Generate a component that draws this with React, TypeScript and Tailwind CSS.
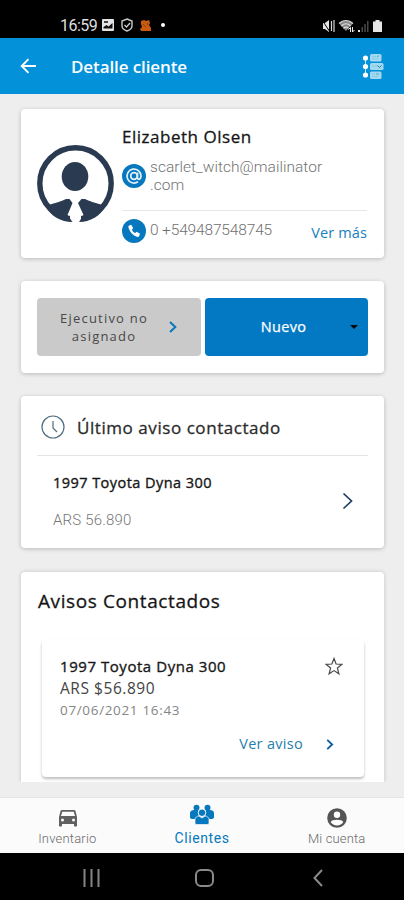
import React from 'react';

const Chevron = ({ className, width = 2 }: { className: string; width?: number }) => (
  <svg viewBox="0 0 12 18" className={className} fill="none" stroke="currentColor" strokeWidth={width}>
    <path d="M1.5 1.5 9.5 9l-8 7.5" />
  </svg>
);

function StatusBar() {
  return (
    <div className="flex h-[38px] shrink-0 items-end bg-black pl-[60px] pr-[20px] pb-[5px] text-[#dedede]">
      <span className="w-[42px] font-[Roboto] text-[16px] leading-[15px] tracking-[-0.5px]">16:59</span>
      <svg viewBox="0 0 12 12" className="mb-[2px] h-[12px] w-[12px]">
        <rect width="12" height="12" rx="1" fill="#e4e4e4" />
        <path d="M1.5 9.5V8l3-2 2 1.5L10.5 4v5.5z" fill="#111" />
        <path d="M2 2h4v2H2z" fill="#444" />
      </svg>
      <svg viewBox="0 0 12 14" className="mb-[1px] ml-[7px] h-[14px] w-[12px]" fill="none" stroke="#c9c9c9" strokeWidth="1.4">
        <path d="M6 1 11 3v5c0 2-2 4-5 5-3-1-5-3-5-5V3z" />
        <path d="m3.5 7 2 2L9 5" />
      </svg>
      <svg viewBox="0 0 11 12" className="mb-[2px] ml-[7px] h-[12px] w-[11px]" fill="#c95b10">
        <path d="M1 2 4 1l2 1 3-1 1 3-1 2 2 3v3H1l-1-2 2-2-1-3z" />
        <path d="m3 5 3 3M7 4l1 2" stroke="#8a400b" />
      </svg>
      <span className="mb-[6px] ml-[10px] h-[4px] w-[4px] rounded-full bg-white" />
      <svg viewBox="0 0 62 14" className="ml-auto h-[14px] w-[62px]" fill="#e6e6e6">
        <path d="M1 4h2l4-3v12l-4-3H1z" />
        <path d="m0 1 8 12" stroke="#000" strokeWidth="1" />
        <path d="M9.500 2v10M12 1v12" stroke="#d6d6d6" strokeWidth="1.2" />
        <path d="M17 4.500c4-4 10-4 14 0l-7 7.500z" fill="#888" />
        <path d="M17 4.500c4-4 10-4 14 0M19.300 7c3-3 6.500-3 9.400 0M21.500 9.300c1.500-1.500 3.500-1.500 5 0" fill="none" stroke="#ddd" strokeWidth="1.2" />
        <path d="m26.500 10.500 2-2v4.500M30.500 8v5l2-2" stroke="#eee" fill="none" />
        <path d="M36 11h2v2h-2z" />
        <path d="M39.500 8h1.500v5h-1.500zM42.300 5h1.500v8h-1.500zM45 2h1.500v11H45z" fill="#484848" />
        <path d="M51 2.500h2.500V1h4v1.500H60V13h-9z" />
      </svg>
    </div>
  );
}

function Header() {
  return (
    <header className="flex h-[56px] shrink-0 items-center bg-[#0391d9] pl-[20px] pr-[20px] text-white">
      <svg viewBox="0 0 17 16" className="h-[16px] w-[17px]" fill="none" stroke="currentColor" strokeWidth="1.900">
        <path d="M16 8H2M8.500 1.200 1.700 8l6.800 6.800" />
      </svg>
      <h1 className="ml-[34px] mt-[2px] text-[17px] font-semibold leading-[22px] tracking-[-0.1px]">Detalle cliente</h1>
      <svg viewBox="0 0 22 27" className="ml-auto h-[27px] w-[22px]">
        <path d="M3.500 4v18" stroke="#bfe4f7" strokeWidth="1" />
        <g fill="#fff">
          <circle cx="3.500" cy="5" r="2.600" />
          <circle cx="3.500" cy="13.500" r="2.600" />
          <circle cx="3.500" cy="22" r="2.600" />
        </g>
        <g fill="#a3d9ee">
          <rect x="8" y="1" width="11.500" height="7.500" rx="1.500" />
          <rect x="8" y="10" width="13.500" height="7" rx="1.500" />
          <rect x="8" y="18.500" width="11.500" height="7.500" rx="1.500" />
        </g>
        <path d="M10 3.500h4M10 5.800h6M10 13h5M10 21h3M10 23.500h6" stroke="#86cbe7" />
        <path d="m15.500 12.500 2 2 2-2" stroke="#147eb9" fill="none" />
        <path d="m15 4 2-1.500M14 21h3" stroke="#4caed9" />
      </svg>
    </header>
  );
}

function Avatar() {
  return (
    <svg viewBox="0 0 78 78" className="mt-[36px] h-[78px] w-[78px] shrink-0">
      <circle cx="38.500" cy="38.500" r="35.700" fill="none" stroke="#2a3a50" strokeWidth="5.400" />
      <path d="M33 56h11v22H33z" fill="#fff" />
      <ellipse cx="38" cy="31.500" rx="13.300" ry="14.600" fill="#2a3a50" />
      <path d="M9 61c5-2 13-3.500 20-7h3.500l3 4L30.500 70l5 7C24 77 13 71 9 61zM68 61c-5-2-13-3.500-20-7h-3.500l-3.500 4 5.500 12-4.500 7C53 77 64 71 68 61z" fill="#2a3a50" />
    </svg>
  );
}

function ClientCard() {
  return (
    <section className="flex h-[149px] shrink-0 rounded-[4px] bg-white pl-[16px] pr-[17px] shadow-[0_1px_4px_rgba(0,0,0,0.22)]">
      <Avatar />
      <div className="ml-[7px] flex min-w-0 flex-1 flex-col">
        <h2 className="mt-[16px] h-[24px] whitespace-nowrap text-[17px] leading-[24px] tracking-[0.52px] text-[#161616] [-webkit-text-stroke:0.3px_#161616]">Elizabeth Olsen</h2>
        <div className="mt-[9px] flex h-[36px] items-center">
          <svg viewBox="0 0 24 24" className="h-[24px] w-[24px] shrink-0">
            <circle cx="12" cy="12" r="12" fill="#0878be" />
            <g fill="none" stroke="#e0f0fa" strokeWidth="1.700">
              <circle cx="12" cy="12" r="3.300" />
              <path d="M15.500 8.500v5c0 3 3.500 2 3.500-1.500a7 7 0 1 0-3 5.800" />
            </g>
          </svg>
          <p className="ml-[4px] font-[Roboto] text-[15.500px] font-light leading-[18px] tracking-[0.03px] text-[#747474]">scarlet_witch@mailinator<br />.com</p>
        </div>
        <div className="mt-[16px] h-px bg-[#e7e7e7]" />
        <div className="flex h-[39px] items-center">
          <svg viewBox="0 0 24 24" className="h-[24px] w-[24px] shrink-0">
            <circle cx="12" cy="12" r="12" fill="#0878be" />
            <path d="m7.200 6.500 2-.8 2 3.600-1.400 1.400c.8 1.500 1.800 2.600 3.400 3.400l1.500-1.300 3.300 2-.8 2.300c-.3.800-1.300 1-2.300.7C11 16.500 8 13.500 6.500 8.700c-.3-1 0-1.900.7-2.200z" fill="#fff" />
          </svg>
          <span className="ml-[4px] mt-[1px] whitespace-nowrap font-[Roboto] text-[15.500px] font-light tracking-[-0.15px] text-[#707070]">0 +549487548745</span>
          <a className="ml-auto mt-[4px] whitespace-nowrap text-[14.500px] tracking-[0.12px] text-[#1680bd]">Ver más</a>
        </div>
      </div>
    </section>
  );
}

function Actions() {
  return (
    <section className="mt-[23px] flex h-[92px] shrink-0 gap-[4px] rounded-[4px] bg-white px-[16px] pt-[17px] shadow-[0_1px_4px_rgba(0,0,0,0.22)]">
      <button className="flex h-[58px] w-[164px] items-center rounded-[4px] bg-[#cacaca] pl-[14px] text-[#484848]">
        <span className="w-[106px] text-center text-[13px] leading-[18px] tracking-[1.2px]">Ejecutivo no asignado</span>
        <Chevron className="ml-[12px] h-[12px] w-[8px] text-[#0878be]" width={3} />
      </button>
      <button className="flex h-[58px] w-[163px] items-center rounded-[4px] bg-[#0379c3] text-white">
        <span className="ml-[55px] w-[47px] whitespace-nowrap text-[14.500px] tracking-[0.35px] [-webkit-text-stroke:0.25px_white]">Nuevo</span>
        <svg viewBox="0 0 8 4" className="ml-[43px] h-[4px] w-[8px]"><path d="M0 0h8L4 4z" fill="#060a10" /></svg>
      </button>
    </section>
  );
}

function LastAd() {
  return (
    <section className="mt-[23px] h-[152px] shrink-0 rounded-[4px] bg-white px-[16px] shadow-[0_1px_4px_rgba(0,0,0,0.22)]">
      <div className="flex h-[60px] items-center border-b border-[#e4e4e4] pl-[4px] pt-[3px]">
        <svg viewBox="0 0 24 24" className="h-[24px] w-[24px]" fill="none" stroke="#4f6d7e" strokeWidth="1.200">
          <circle cx="12" cy="12" r="11" />
          <path d="M12 6v7l4 4" />
        </svg>
        <h2 className="ml-[12px] mt-[1px] whitespace-nowrap text-[17px] tracking-[0.56px] text-[#2b2b2b] [-webkit-text-stroke:0.3px_#2b2b2b]">Último aviso contactado</h2>
      </div>
      <div className="flex h-[91px] items-center pl-[16px] pr-[14px]">
        <div>
          <h3 className="h-[20px] whitespace-nowrap text-[14.500px] leading-[20px] tracking-[0.45px] text-[#161616] [-webkit-text-stroke:0.35px_#161616]">1997 Toyota Dyna 300</h3>
          <p className="mt-[17px] h-[20px] font-[Roboto] text-[15px] font-light leading-[20px] tracking-[0.2px] text-[#777]">ARS 56.890</p>
        </div>
        <Chevron className="mb-[1px] ml-auto h-[18px] w-[12px] text-[#193d61]" width={1.7} />
      </div>
    </section>
  );
}

function Ads() {
  return (
    <section className="mt-[24px] h-[210px] shrink-0 rounded-t-[4px] bg-white px-[16px] shadow-[0_0_4px_rgba(0,0,0,0.18)] [clip-path:inset(-4px_-6px_0_-6px)]">
      <h2 className="h-[68px] whitespace-nowrap pl-[1px] pt-[17px] text-[19px] leading-[24px] tracking-[0.6px] text-[#161616] [-webkit-text-stroke:0.3px_#161616]">Avisos Contactados</h2>
      <article className="ml-[5px] mr-[4px] flex h-[137px] flex-col rounded-[4px] bg-white pl-[18px] pr-[21px] pt-[15px] shadow-[0_2px_3px_rgba(0,0,0,0.26)]">
        <div className="flex items-center">
          <h3 className="h-[22px] whitespace-nowrap text-[15px] leading-[22px] tracking-[0.55px] text-[#181818] [-webkit-text-stroke:0.35px_#181818]">1997 Toyota Dyna 300</h3>
          <svg viewBox="0 0 18 18" className="ml-auto mt-[1px] h-[19px] w-[18px]" fill="none" stroke="#4a4a4a" strokeWidth="1.200">
            <path d="m9 1 2.100 5.500 5.900.3-4.600 3.700 1.500 5.800L9 13.100l-4.900 3.200 1.500-5.800L1 6.800l5.900-.3z" />
          </svg>
        </div>
        <p className="h-[22px] text-[15.500px] leading-[22px] tracking-[0.55px] text-[#444]">ARS $56.890</p>
        <p className="h-[22px] text-[13.500px] leading-[22px] tracking-[0.66px] text-[#858585]">07/06/2021 16:43</p>
        <div className="mt-[12px] flex items-center justify-end pr-[9px] text-[#287eac]">
          <a className="whitespace-nowrap text-[14.500px] leading-[22px] tracking-[0.3px]">Ver aviso</a>
          <Chevron className="ml-[23px] h-[11px] w-[8px] text-[#075ca0]" width={3} />
        </div>
      </article>
    </section>
  );
}

function TabBar() {
  return (
    <nav className="grid h-[56px] shrink-0 grid-cols-3 border-t border-[#e5e5e5] bg-[#fbfbfb] text-[#6a6a6a]">
      <div className="flex flex-col items-center pt-[11px]">
        <svg viewBox="0 0 20 18" className="ml-[1px] h-[18px] w-[20px]" fill="#606060" fillRule="evenodd">
          <path d="M4 1h12c.7 0 1.200.4 1.500 1L19 8v8.500c0 .6-.4 1-1 1H17c-.6 0-1-.4-1-1V15H4v1.500c0 .6-.4 1-1 1H2c-.6 0-1-.4-1-1V8l1.500-6c.3-.6.800-1 1.500-1zM4.300 2.800 3 7h14l-1.300-4.200zM4.500 9.500a1.500 1.500 0 1 0 0 3 1.500 1.500 0 0 0 0-3zm11 0a1.500 1.500 0 1 0 0 3 1.500 1.500 0 0 0 0-3z" />
        </svg>
        <span className="mt-[4px] font-[Roboto] text-[13px] font-light leading-[16px] tracking-[0.2px]">Inventario</span>
      </div>
      <div className="flex flex-col items-center pt-[6px] text-[#0878be]">
        <svg viewBox="0 0 24 21" className="h-[21px] w-[24px]" fill="currentColor">
          <circle cx="6.500" cy="3.700" r="3" />
          <circle cx="17.500" cy="3.700" r="3" />
          <path d="M0 13V9c0-2 2-3 4-3h4l2 3-3 6H2c-1.200 0-2-.8-2-2zM24 13V9c0-2-2-3-4-3h-4l-2 3 3 6h5c1.200 0 2-.8 2-2z" />
          <circle cx="12" cy="8.700" r="3.800" stroke="#fbfbfb" />
          <path d="M5 19v-3.500c0-2 2-3.500 4-3.500l3 2 3-2c2 0 4 1.500 4 3.500V19c0 1-.8 1.500-2 1.500H7c-1.200 0-2-.5-2-1.500z" stroke="#fbfbfb" strokeWidth=".7" />
        </svg>
        <span className="mt-[5px] font-[Roboto] text-[14px] leading-[17px] tracking-[0.6px]">Clientes</span>
      </div>
      <div className="flex flex-col items-center pt-[10px]">
        <svg viewBox="0 0 20 20" className="h-[20px] w-[20px]">
          <circle cx="10" cy="10" r="9.800" fill="#555" />
          <circle cx="10" cy="6.700" r="3.200" fill="#fff" />
          <path d="M3.700 14c1-3 11.600-3 12.600 0-2.500 4.500-10 4.500-12.600 0z" fill="#fff" />
        </svg>
        <span className="mt-[3px] font-[Roboto] text-[13px] font-light leading-[16px] tracking-[0.15px]">Mi cuenta</span>
      </div>
    </nav>
  );
}

function SystemBar() {
  return (
    <div className="flex h-[47px] shrink-0 items-center bg-black pl-[83px] pr-[81px] pt-[2px]">
      <svg viewBox="0 0 17 18" className="h-[18px] w-[17px]" stroke="#858585" strokeWidth="2"><path d="M1.500 0v18M8.500 0v18M15.500 0v18" /></svg>
      <span className="ml-[95px] h-[18px] w-[19px] rounded-[6px] border-2 border-[#8a8a8a]" />
      <svg viewBox="0 0 10 18" className="ml-auto h-[18px] w-[10px]" fill="none" stroke="#8a8a8a" strokeWidth="2"><path d="M9 1 1.500 9 9 17" /></svg>
    </div>
  );
}

export default function App() {
  return (
    <div className="flex h-[900px] w-[404px] flex-col overflow-hidden bg-[#eeeeee] font-['Open_Sans',sans-serif]">
      <StatusBar />
      <Header />
      <main className="flex h-[703px] shrink-0 flex-col pl-[21px] pr-[20px] pt-[15px]">
        <ClientCard />
        <Actions />
        <LastAd />
        <Ads />
      </main>
      <TabBar />
      <SystemBar />
    </div>
  );
}
